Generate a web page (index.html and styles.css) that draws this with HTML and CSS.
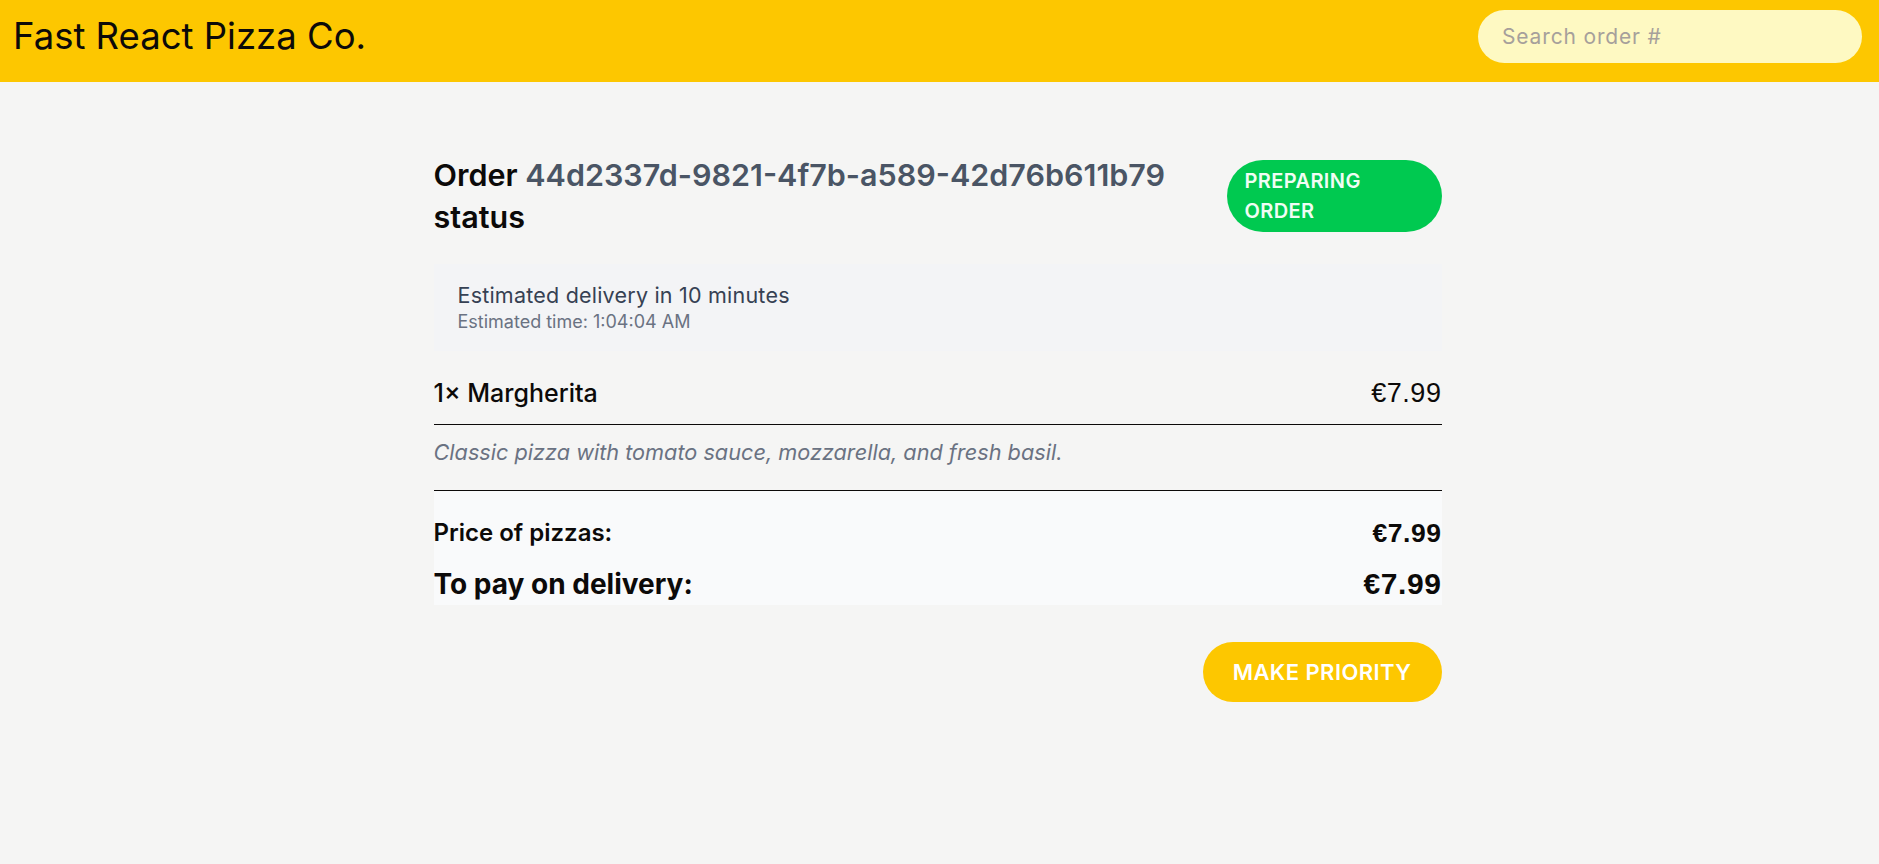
FILE: index.html
```html
<!DOCTYPE html>
<html lang="en">
<head>
<meta charset="utf-8">
<title>Fast React Pizza Co.</title>
<link rel="stylesheet" href="styles.css">
</head>
<body>
<header class="topbar">
  <a class="brand" href="#">Fast React Pizza Co.</a>
  <form class="search">
    <input class="search-input" type="text" placeholder="Search order #">
  </form>
</header>
<main class="order">
  <div class="order-head">
    <h2 class="order-title">Order <span class="order-id">44d2337d-9821-4f7b-a589-42d76b611b79</span> status</h2>
    <span class="badge">Preparing order</span>
  </div>
  <div class="eta">
    <p class="eta-main">Estimated delivery in 10 minutes</p>
    <p class="eta-time">Estimated time: 1:04:04 AM</p>
  </div>
  <ul class="items">
    <li class="item">
      <div class="item-row">
        <p class="item-name">1&times; Margherita</p>
        <p class="price">&euro;7.99</p>
      </div>
      <p class="item-desc">Classic pizza with tomato sauce, mozzarella, and fresh basil.</p>
    </li>
  </ul>
  <div class="totals">
    <div class="total-row">
      <p>Price of pizzas:</p>
      <p class="price">&euro;7.99</p>
    </div>
    <div class="total-row grand">
      <p>To pay on delivery:</p>
      <p class="price">&euro;7.99</p>
    </div>
  </div>
  <div class="actions">
    <button class="btn-priority" type="button">Make priority</button>
  </div>
</main>
</body>
</html>
```

FILE: styles.css
```css
* { box-sizing: border-box; }

html, body {
  margin: 0;
  padding: 0;
}

body {
  background: #f5f5f4;
  color: #0c0a09;
  font-family: Inter, "Open Sans", "Noto Sans", sans-serif;
  min-height: 864px;
}

p { margin: 0; }

.topbar {
  background: #fdc700;
  height: 82px;
  padding: 10px 17px 19px 13px;
  display: flex;
  align-items: center;
  justify-content: space-between;
}

.brand {
  color: #0c0a09;
  text-decoration: none;
  font-size: 36.5px;
  line-height: 53px;
  font-weight: 400;
}

.search { display: flex; }

.search-input {
  width: 384px;
  height: 53px;
  border: none;
  outline: none;
  border-radius: 999px;
  background: #fef9c2;
  padding: 0 24px;
  font-family: inherit;
  font-size: 21px;
  letter-spacing: 0.04em;
  color: #44403c;
}

.search-input::placeholder { color: #a6a09b; }

.order {
  width: 1012px;
  margin: 0 auto;
  padding: 72px 4px 0 0;
}

.order-head {
  display: flex;
  align-items: center;
  justify-content: space-between;
  gap: 24px;
}

.order-title {
  margin: 0;
  font-size: 30.5px;
  line-height: 42px;
  font-weight: 600;
  max-width: 780px;
}

.order-id {
  color: #4a5565;
  white-space: nowrap;
}

.badge {
  flex: 0 0 auto;
  width: 215px;
  padding: 6px 18px;
  border-radius: 999px;
  background: #00c950;
  color: #f0fdf4;
  text-transform: uppercase;
  font-size: 20px;
  line-height: 30px;
  font-weight: 600;
  letter-spacing: 0.02em;
}

.eta {
  margin-top: 26px;
  background: #f3f4f6;
  padding: 16px 24px 17px;
}

.eta-main {
  font-size: 21.5px;
  line-height: 30px;
  letter-spacing: 0.01em;
  color: #364153;
}

.eta-time {
  font-size: 18px;
  line-height: 24px;
  color: #6a7282;
}

.items {
  list-style: none;
  margin: 24px 0 0;
  padding: 0;
}

.item {
  border-bottom: 1px solid #0c0a09;
}

.item-row {
  display: flex;
  justify-content: space-between;
  align-items: center;
  padding-bottom: 13px;
  border-bottom: 1px solid #0c0a09;
  font-size: 25px;
  line-height: 36px;
  font-weight: 500;
}

.price {
  font-family: "Liberation Sans", Arial, sans-serif;
  font-size: 27px;
  letter-spacing: 0.02em;
}

.item-desc {
  padding: 12px 0 23px;
  font-size: 21.7px;
  line-height: 30px;
  font-style: italic;
  color: #6a7282;
}

.totals {
  background: #f9fafb;
  padding-top: 24px;
  display: flex;
  flex-direction: column;
  gap: 12px;
}

.total-row {
  display: flex;
  justify-content: space-between;
  align-items: center;
  font-size: 24px;
  line-height: 36px;
  font-weight: 600;
}

.total-row .price {
  font-size: 26.5px;
  font-weight: 700;
}

.total-row.grand {
  font-size: 28px;
  line-height: 42px;
  font-weight: 700;
}

.total-row.grand .price {
  font-size: 30px;
  font-weight: 700;
}

.actions {
  margin-top: 37px;
  display: flex;
  justify-content: flex-end;
}

.btn-priority {
  height: 60px;
  padding: 0 30px;
  border: none;
  border-radius: 999px;
  background: #fdc700;
  color: #ffffff;
  font-family: inherit;
  font-size: 22px;
  font-weight: 600;
  text-transform: uppercase;
  letter-spacing: 0.02em;
  cursor: pointer;
}
```
